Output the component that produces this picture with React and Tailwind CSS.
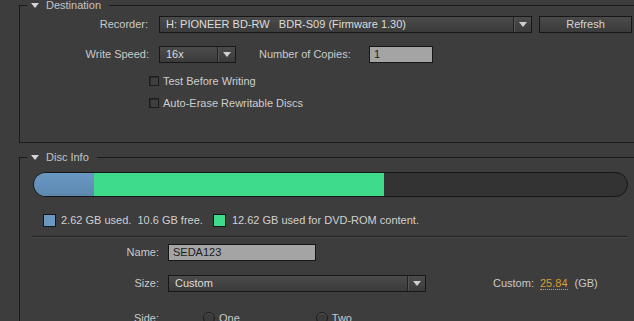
import React from 'react';

const Arrow = () => (
  <div className="w-0 h-0 border-l-[4px] border-r-[4px] border-t-[5px] border-l-transparent border-r-transparent border-t-[#cfcfcf]" />
);

const Dropdown = ({ value, width, pre }) => (
  <div className={`flex h-[17px] border border-[#171717] bg-linear-to-b from-[#4b4b4b] to-[#3b3b3b] ${width}`}>
    <div className={`flex-1 pl-[6px] leading-[15px] text-[#dcdcdc] overflow-hidden ${pre ? 'whitespace-pre' : ''}`}>{value}</div>
    <div className="w-[18px] flex items-center justify-center border-l border-[#222] shadow-[inset_1px_0_0_#555]">
      <Arrow />
    </div>
  </div>
);

const Field = ({ value, width }) => (
  <div className={`h-[17px] border border-[#161616] bg-[#a4a4a4] pl-[4px] leading-[15px] text-[#1c1c1c] ${width}`}>{value}</div>
);

const Checkbox = ({ label }) => (
  <div className="flex items-center h-[12px] pl-[129px]">
    <div className="w-[10px] h-[10px] border border-[#1c1c1c] bg-[#3f3f3f] shadow-[inset_1px_1px_0_#2c2c2c]" />
    <span className="ml-[4px] text-[#cdcdcd]">{label}</span>
  </div>
);

const Legend = ({ title }) => (
  <legend className="ml-[7px] px-[4px] pr-[8px] leading-[12px]">
    <div className="flex items-center">
      <div className="w-0 h-0 border-l-[4px] border-r-[4px] border-t-[5px] border-l-transparent border-r-transparent border-t-[#d4d4d4]" />
      <span className="ml-[7px] text-[#c4c4c4]">{title}</span>
    </div>
  </legend>
);

const Radio = ({ label }) => (
  <div className="flex items-center">
    <div className="w-[12px] h-[12px] rounded-full border border-[#1c1c1c] bg-[#3a3a3a] shadow-[inset_0_1px_0_#555]" />
    <span className="ml-[4px]">{label}</span>
  </div>
);

export default function App() {
  return (
    <div className="w-[634px] h-[321px] overflow-hidden bg-[#3d3d3d] font-['Liberation_Sans',Arial,sans-serif] text-[11px] text-[#c9c9c9]">
      <div className="pl-[19px] -mt-[1px]">
        {/* Destination */}
        <fieldset className="w-[650px] h-[144px] border border-[#1b1b1b]">
          <Legend title="Destination" />
          <div className="pt-[5px]">
            <div className="flex items-center">
              <div className="w-[129px] text-right pr-[1px]">Recorder:</div>
              <div className="ml-[10px]">
                <Dropdown value="H: PIONEER BD-RW   BDR-S09 (Firmware 1.30)" width="w-[373px]" pre />
              </div>
              <button className="ml-[7px] w-[93px] h-[17px] border border-[#171717] bg-linear-to-b from-[#4b4b4b] to-[#3b3b3b] text-[#d4d4d4] leading-[15px]">Refresh</button>
            </div>
            <div className="flex items-center mt-[13px]">
              <div className="w-[129px] text-right">Write Speed:</div>
              <div className="ml-[10px]">
                <Dropdown value="16x" width="w-[77px]" />
              </div>
              <div className="ml-[23px] w-[96px]">Number of Copies:</div>
              <div className="ml-[14px]">
                <Field value="1" width="w-[64px]" />
              </div>
            </div>
            <div className="mt-[12px]">
              <Checkbox label="Test Before Writing" />
            </div>
            <div className="mt-[10px]">
              <Checkbox label="Auto-Erase Rewritable Discs" />
            </div>
          </div>
        </fieldset>

        {/* Disc Info */}
        <fieldset className="mt-[8px] w-[650px] h-[200px] border border-[#1b1b1b]">
          <Legend title="Disc Info" />
          <div className="pl-[13px] pt-[9px]">
            <div className="w-[595px] h-[25px] rounded-full border border-[#161616] bg-[#333333] overflow-hidden flex">
              <div className="w-[60px] bg-linear-to-b from-[#6b98c2] to-[#5c88b2]" />
              <div className="w-[290px] bg-[#3edb8b]" />
            </div>
            <div className="flex items-center mt-[15px] pl-[10px]">
              <div className="w-[13px] h-[13px] border border-[#161616] bg-[#6b98c2]" />
              <span className="ml-[5px] whitespace-pre text-[#d0d0d0]">2.62 GB used.  10.6 GB free.</span>
              <div className="ml-[10px] w-[13px] h-[13px] border border-[#161616] bg-[#3edb8b]" />
              <span className="ml-[6px] text-[#d0d0d0]">12.62 GB used for DVD-ROM content.</span>
            </div>
            <div className="mt-[7px] -ml-[1px] w-[595px] h-[1px] bg-[#222] shadow-[0_1px_0_#4a4a4a]" />
          </div>
          <div className="pt-[7px]">
            <div className="flex items-center">
              <div className="w-[139px] text-right">Name:</div>
              <div className="ml-[9px]">
                <Field value="SEDA123" width="w-[148px]" />
              </div>
            </div>
            <div className="flex items-center mt-[14px]">
              <div className="w-[139px] text-right">Size:</div>
              <div className="ml-[9px]">
                <Dropdown value="Custom" width="w-[258px]" />
              </div>
              <div className="ml-[67px]">Custom:</div>
              <span className="ml-[6px] text-[#d6a02c] border-b border-dotted border-[#d6a02c] leading-[12px]">25.84</span>
              <span className="ml-[7px]">(GB)</span>
            </div>
            <div className="flex items-center mt-[18px]">
              <div className="w-[139px] text-right">Side:</div>
              <div className="ml-[44px]">
                <Radio label="One" />
              </div>
              <div className="ml-[76px]">
                <Radio label="Two" />
              </div>
            </div>
          </div>
        </fieldset>
      </div>
    </div>
  );
}
